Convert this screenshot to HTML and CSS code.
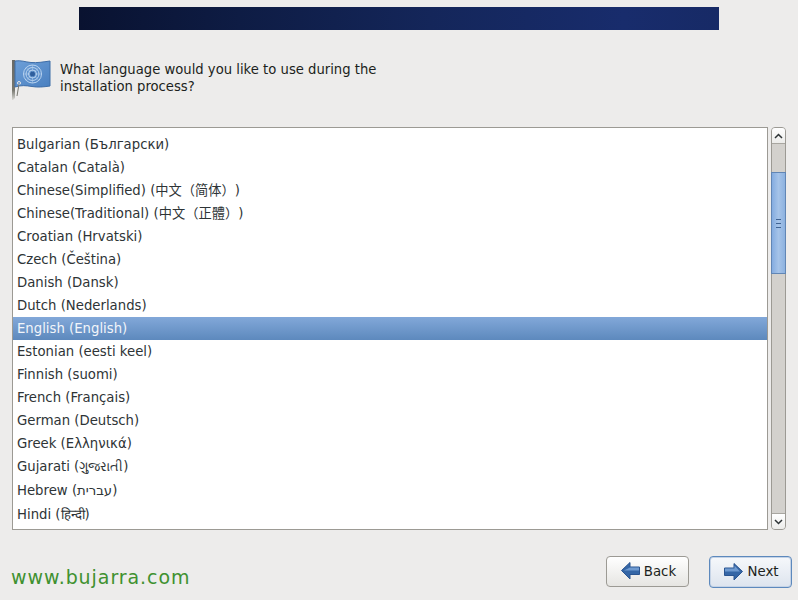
FILE: index.html
```html
<!DOCTYPE html>
<html>
<head>
    <title>Language Selection</title>
    <link rel="stylesheet" href="styles.css">
</head>
<body>
    <div class="banner"></div>

    <div class="question">
        <svg class="flag" width="40" height="42" viewBox="0 0 40 42">
            <defs>
                <linearGradient id="flagFill" x1="0" y1="0" x2="1" y2="1">
                    <stop offset="0" stop-color="#6d9fd8"/>
                    <stop offset="1" stop-color="#4a80c0"/>
                </linearGradient>
                <linearGradient id="poleFill" x1="0" y1="0" x2="0" y2="1">
                    <stop offset="0" stop-color="#6a6a66"/>
                    <stop offset="0.75" stop-color="#77776f"/>
                    <stop offset="1" stop-color="#d8d8d4"/>
                </linearGradient>
            </defs>
            <path d="M0 1h3v38l-2 2h-1z" fill="url(#poleFill)"/>
            <path d="M3 2c6-1 10 1 16 1.500s12-.5 19-1.500v25c-7 1-12 1.500-18 .5s-11-1.500-17 .5z" fill="url(#flagFill)" stroke="#3f6ea8" stroke-width="1"/>
            <g fill="none" stroke="#b9d3ef" stroke-width="1">
                <circle cx="20.500" cy="15" r="9"/>
                <circle cx="20.500" cy="15" r="6.500"/>
                <circle cx="20.500" cy="15" r="4"/>
                <path d="M11 15h19M20.500 6v18M14 8.500l13 13M27 8.500l-13 13" stroke-width="0.500"/>
            </g>
            <circle cx="20.500" cy="15" r="2.500" fill="#2f5f9e"/>
            <circle cx="7" cy="24" r="1.500" fill="none" stroke="#e6e6e6" stroke-width="1"/>
            <path d="M7 25l-2 12" stroke="#77776f" stroke-width="1" fill="none"/>
        </svg>
        <p class="question-text">What language would you like to use during the<br>installation process?</p>
    </div>

    <div class="chooser">
        <ul class="lang-list">
            <li>Bulgarian (Български)</li>
            <li>Catalan (Català)</li>
            <li>Chinese(Simplified) (中文（简体）)</li>
            <li>Chinese(Traditional) (中文（正體）)</li>
            <li>Croatian (Hrvatski)</li>
            <li>Czech (Čeština)</li>
            <li>Danish (Dansk)</li>
            <li>Dutch (Nederlands)</li>
            <li class="selected">English (English)</li>
            <li>Estonian (eesti keel)</li>
            <li>Finnish (suomi)</li>
            <li>French (Français)</li>
            <li>German (Deutsch)</li>
            <li>Greek (Ελληνικά)</li>
            <li class="tall">Gujarati (ગુજરાતી)</li>
            <li class="tall">Hebrew (עברית)</li>
            <li class="tall">Hindi (हिन्दी)</li>
        </ul>
        <div class="scrollbar">
            <div class="step step-up">
                <svg width="9" height="6" viewBox="0 0 9 6"><path d="M1 5l3.500-3.500L8 5" fill="none" stroke="#2e3436" stroke-width="1.500"/></svg>
            </div>
            <div class="track">
                <div class="thumb"><span class="grip"></span></div>
            </div>
            <div class="step step-down">
                <svg width="9" height="6" viewBox="0 0 9 6"><path d="M1 1l3.500 3.500L8 1" fill="none" stroke="#2e3436" stroke-width="1.500"/></svg>
            </div>
        </div>
    </div>

    <div class="footer">
        <span class="watermark">www.bujarra.com</span>
        <div class="buttons">
            <button class="btn" type="button">
                <svg width="19" height="20" viewBox="0 0 19 20"><path d="M.5 9.500L9 1.500V6h9.500v7.500H9V18z" fill="#3566a6" stroke="#2a5490" stroke-width="1"/><path d="M9 6.500h9v3H3z" fill="#6f9ad0"/></svg>
                Back
            </button>
            <button class="btn btn-default" type="button">
                <svg width="19" height="20" viewBox="0 0 19 20"><path d="M18.500 9.500L10 1.500V6H.5v7.500H10V18z" fill="#3566a6" stroke="#2a5490" stroke-width="1"/><path d="M1 6.500h9.500v-3l5.500 6H1z" fill="#6f9ad0"/></svg>
                Next
            </button>
        </div>
    </div>
</body>
</html>
```

FILE: styles.css
```css
html, body {
    margin: 0;
    height: 600px;
    overflow: hidden;
}
body {
    background-color: #edeceb;
    color: #2e3436;
    font-family: "DejaVu Sans", "Noto Sans CJK SC", sans-serif;
    font-size: 13.33px;
    padding-top: 7px;
    box-sizing: border-box;
}
.banner {
    width: 640px;
    height: 23px;
    margin-left: 79px;
    background: linear-gradient(90deg, #091230 0%, #0e1c44 25%, #14265a 55%, #182c6c 85%, #172a66 100%);
}
.question {
    display: flex;
    align-items: flex-start;
    margin: 29px 0 0 12px;
    height: 68px;
}
.flag {
    flex: none;
}
.question-text {
    margin: 2px 0 0 8px;
    color: #1c1f20;
    font-size: 13.2px;
    line-height: 17px;
}
.chooser {
    display: flex;
    margin-left: 12px;
    height: 403px;
}
.lang-list {
    width: 756px;
    margin: 0;
    padding: 5px 0 0;
    box-sizing: border-box;
    list-style: none;
    background-color: #fff;
    border: 1px solid #9c9a94;
    overflow: hidden;
    font-size: 13.25px;
    text-spacing-trim: space-all;
}
.lang-list li {
    height: 23px;
    line-height: 23px;
    padding-left: 4px;
    white-space: nowrap;
}
.lang-list .tall {
    height: 24px;
}
.lang-list .selected {
    color: #f2f5fa;
    background: linear-gradient(180deg, #82a8d9 0%, #5d89bd 100%);
}
.scrollbar {
    width: 15px;
    margin-left: 3px;
    display: flex;
    flex-direction: column;
    background-color: #d3d1cd;
    border-radius: 4px;
    border: 1px solid #9c9a94;
    box-sizing: border-box;
}
.step {
    height: 15px;
    flex: none;
    display: flex;
    align-items: center;
    justify-content: center;
    background: linear-gradient(180deg, #fff 0%, #ececea 100%);
}
.step-up {
    border-bottom: 1px solid #a8a6a0;
    border-radius: 3px 3px 0 0;
}
.step-down {
    border-top: 1px solid #a8a6a0;
    border-radius: 0 0 3px 3px;
}
.track {
    flex: 1;
    padding-top: 28px;
}
.thumb {
    height: 102px;
    margin: 0 -1px;
    box-sizing: border-box;
    border: 1px solid #6186b5;
    background: linear-gradient(90deg, #84ace0 0%, #a5c3e8 50%, #8db2e0 100%);
    display: flex;
    align-items: center;
    justify-content: center;
}
.grip {
    width: 5px;
    height: 7px;
    border-top: 1px solid #3f6394;
    border-bottom: 1px solid #3f6394;
    background: linear-gradient(#3f6394, #3f6394) center / 100% 1px no-repeat;
}
.footer {
    display: flex;
    justify-content: space-between;
    align-items: flex-start;
    margin-top: 26px;
    padding: 0 6px 0 11px;
}
.watermark {
    margin-top: 10px;
    color: #3f9130;
    font-size: 19px;
    letter-spacing: 0.93px;
}
.buttons {
    display: flex;
    gap: 20px;
}
.btn {
    width: 83px;
    height: 31px;
    padding: 0 0 1px 2px;
    display: flex;
    align-items: center;
    justify-content: center;
    gap: 4px;
    font-family: inherit;
    font-size: 13.33px;
    color: #1c1f20;
    background: linear-gradient(180deg, #fff 0%, #e6e5e2 100%);
    border: 1px solid #9c9a94;
    border-radius: 4px;
}
.btn-default {
    height: 32px;
    border-color: #5d89bd;
    box-shadow: inset 0 0 0 1px #c5d3e6;
    background: linear-gradient(180deg, #f6f8fb 0%, #dde4ee 100%);
}
```
